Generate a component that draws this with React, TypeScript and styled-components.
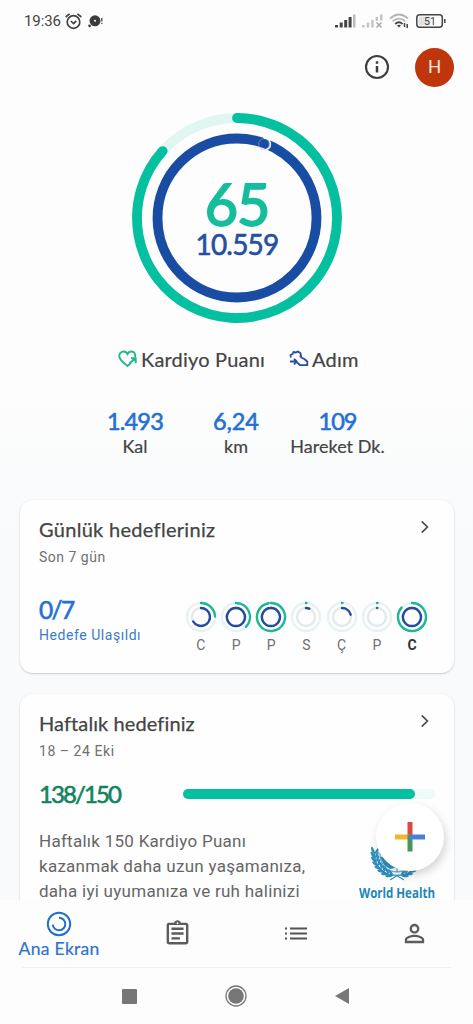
import React from "react";
import styled, { createGlobalStyle } from "styled-components";
import { MdOutlineAssignment, MdPersonOutline } from "react-icons/md";

const sans = `Lato, "Noto Sans", sans-serif`;
const roboto = `Roboto, "Noto Sans", sans-serif`;

const Global = createGlobalStyle`
  * { box-sizing: border-box; }
  body { margin: 0; background: #fdfdfd; font-family: ${roboto}; overflow: hidden; }
  svg { display: block; flex: none; }
`;

const Screen = styled.div`
  width: 473px;
  height: 1024px;
  display: flex;
  flex-direction: column;
  overflow: hidden;
  background: #fdfdfd;
`;

const Text = styled.span<{
  $size: number;
  $color: string;
  $line: number;
  $weight?: number;
  $spacing?: number;
  $stroke?: number;
  $body?: boolean;
}>`
  display: block;
  font-family: ${(p) => (p.$body ? roboto : sans)};
  font-size: ${(p) => p.$size}px;
  line-height: ${(p) => p.$line}px;
  color: ${(p) => p.$color};
  font-weight: ${(p) => p.$weight ?? 400};
  letter-spacing: ${(p) => p.$spacing ?? 0}px;
  -webkit-text-stroke: ${(p) => p.$stroke ?? 0}px currentColor;
  white-space: pre;
`;

const StatusBar = styled.div`
  height: 42px;
  flex: none;
  display: flex;
  align-items: center;
  justify-content: space-between;
  padding: 0 27px 0 24px;
`;
const StatusGroup = styled.div<{ $gap: number }>`
  display: flex;
  align-items: center;
  gap: ${(p) => p.$gap}px;
`;

const TopBar = styled.div`
  height: 50px;
  flex: none;
  display: flex;
  align-items: center;
  justify-content: flex-end;
  gap: 25px;
  padding-right: 19px;
`;
const Avatar = styled.div`
  width: 39px;
  height: 39px;
  border-radius: 50%;
  background: #bf360c;
  display: flex;
  align-items: center;
  justify-content: center;
`;

const Scroll = styled.main`
  height: 808px;
  flex: none;
  overflow: hidden;
  background: linear-gradient(#fdfdfd 300px, #f8fafb 440px);
`;
const Hero = styled.section`
  width: 212px;
  height: 212px;
  margin: 20px auto 0 131px;
  display: grid;
  > * { grid-area: 1 / 1; }
`;
const HeroNumbers = styled.div`
  display: flex;
  flex-direction: column;
  align-items: center;
  padding-top: 65px;
`;
const Legend = styled.div`
  display: flex;
  align-items: center;
  height: 30px;
  margin-top: 20px;
  padding-left: 118px;
  gap: 24px;
`;
const LegendItem = styled.div`
  display: flex;
  align-items: center;
  gap: 3px;
`;
const Stats = styled.div`
  display: grid;
  grid-template-columns: 102px 100px 103px;
  padding-left: 84px;
  margin-top: 34px;
  height: 92px;
`;
const Stat = styled.div`
  display: flex;
  flex-direction: column;
  align-items: center;
`;

const Card = styled.section<{ $height: number }>`
  height: ${(p) => p.$height}px;
  margin: 0 19px 21px 20px;
  padding: 17px 19px 0;
  background: #fefefe;
  border-radius: 13px;
  box-shadow: 0 1px 2px rgba(60, 64, 67, 0.22), 0 0 2px rgba(60, 64, 67, 0.05);
`;
const CardHead = styled.div`
  display: flex;
  justify-content: space-between;
  padding-right: 5px;
  > svg { margin-top: 2px; }
`;
const CardTitles = styled.div`
  display: flex;
  flex-direction: column;
  gap: 2px;
`;
const GoalRow = styled.div`
  display: flex;
  justify-content: space-between;
  margin-top: 27px;
  margin-right: 7px;
`;
const Days = styled.div`
  display: flex;
  gap: 3.2px;
  padding-top: 4px;
`;
const Day = styled.div`
  width: 32px;
  display: flex;
  flex-direction: column;
  align-items: center;
`;
const WeekRow = styled.div`
  display: flex;
  align-items: center;
  justify-content: space-between;
  height: 30px;
  margin-top: 15px;
`;
const Track = styled.div`
  width: 252px;
  height: 10px;
  border-radius: 5px;
  background: #eefaf7;
`;
const Fill = styled.div`
  height: 100%;
  border-radius: 5px;
  background: #04c0a0;
`;
const WeekBody = styled.div`
  display: flex;
  justify-content: space-between;
  margin-top: 20px;
`;
const Partner = styled.div`
  width: 76px;
  margin-top: 6px;
  position: relative;
`;
const PartnerName = styled.span`
  display: block;
  width: max-content;
  font: 700 15px/18px "Open Sans", sans-serif;
  color: #1c87b5;
  white-space: nowrap;
  transform: scaleX(0.768);
  transform-origin: left;
`;
const Fab = styled.button`
  position: absolute;
  left: 17px;
  top: -32px;
  width: 68px;
  height: 68px;
  padding: 0;
  border: 0;
  border-radius: 50%;
  background: #fff;
  display: flex;
  align-items: center;
  justify-content: center;
  box-shadow: 2px 4px 8px rgba(60, 64, 67, 0.22);
`;

const TabBar = styled.nav`
  height: 67px;
  flex: none;
  display: grid;
  grid-template-columns: repeat(4, 118.3px);
  background: #fdfdfd;
`;
const Tab = styled.div<{ $active?: boolean }>`
  display: flex;
  flex-direction: column;
  align-items: center;
  justify-content: ${(p) => (p.$active ? "flex-start" : "center")};
  padding-top: ${(p) => (p.$active ? 11 : 0)}px;
  color: #5c5c5c;
`;
const SystemBar = styled.div`
  height: 57px;
  flex: none;
  display: flex;
  align-items: center;
  margin: 0 22px;
  border-top: 1px solid #f1f1f1;
  padding-left: 100px;
  gap: 88px;
`;

function arcPath(c: number, r: number, from: number, to: number) {
  const pt = (a: number) => {
    const t = ((a - 90) * Math.PI) / 180;
    return `${(c + r * Math.cos(t)).toFixed(2)} ${(c + r * Math.sin(t)).toFixed(2)}`;
  };
  return `M${pt(from)}A${r} ${r} 0 ${to - from > 180 ? 1 : 0} 1 ${pt(to)}`;
}

function MainRing() {
  return (
    <svg width="212" height="212" fill="none" strokeLinecap="round" strokeWidth="9.8">
      <circle cx="106" cy="106" r="100" stroke="#e0f6f1" />
      <path d={arcPath(106, 100, 0, 312)} stroke="#04c0a0" />
      <circle cx="106" cy="106" r="79.5" stroke="#184da3" />
      <circle cx="133" cy="32" r="5.4" stroke="#8ea9d5" strokeWidth=".6" />
      <path d="M133.5 26.2A5.8 5.8 0 0 1 135.4 37.5" stroke="#f4f8ff" strokeWidth="1.5" />
    </svg>
  );
}

type DayData = { label: string; outer: number; inner: number; today?: boolean };
const days: DayData[] = [
  { label: "C", outer: 88, inner: 240 },
  { label: "P", outer: 135, inner: 359 },
  { label: "P", outer: 350, inner: 359 },
  { label: "S", outer: 2, inner: 22 },
  { label: "Ç", outer: 2, inner: 75 },
  { label: "P", outer: 2, inner: 2 },
  { label: "C", outer: 312, inner: 359, today: true },
];

function MiniRing({ outer, inner }: DayData) {
  return (
    <svg width="32" height="32" fill="none" strokeLinecap="round" strokeWidth="2.4">
      <circle cx="16" cy="16" r="14" stroke="#e6f3f2" />
      <circle cx="16" cy="16" r="9" stroke="#e4e9ec" />
      <path d={arcPath(16, 14, 0, outer)} stroke="#1db793" />
      <path d={arcPath(16, 9, 0, inner)} stroke={inner < 5 ? "#3d6170" : "#254b9c"} />
    </svg>
  );
}

const Chevron = () => (
  <svg width="10" height="16" viewBox="0 0 10 16" fill="none" stroke="#4d4d4d" strokeWidth="1.7">
    <path d="M1.7 2.3l5.7 5.7-5.7 5.7" />
  </svg>
);

const leafAngles = [186, 175, 164, 153, 142, 131, 120, 109];

function Laurel() {
  return (
    <g>
      <path d="M15.5 17C15 32 26 41 37 40l8 5" fill="none" stroke="#2c8dbc" strokeWidth="1.2" />
      {leafAngles.map((deg) => {
        const t = (deg * Math.PI) / 180;
        const at = (r: number) => ({ x: 38 + r * Math.cos(t), y: 18 + r * Math.sin(t) });
        const out = at(24.3);
        const inn = at(20.2);
        return (
          <g key={deg} fill="#2c8dbc">
            <ellipse cx={out.x} cy={out.y} rx="1.3" ry="3.8" transform={`rotate(${deg - 205} ${out.x} ${out.y})`} />
            <ellipse cx={inn.x} cy={inn.y} rx="1.2" ry="3.3" transform={`rotate(${deg - 150} ${inn.x} ${inn.y})`} />
          </g>
        );
      })}
    </g>
  );
}

function Emblem() {
  return (
    <svg width="76" height="48" viewBox="0 0 76 48">
      <Laurel />
      <g transform="translate(76 0) scale(-1 1)"><Laurel /></g>
      <g fill="none" stroke="#2c8dbc" strokeWidth=".9">
        <circle cx="38" cy="20" r="17" />
        <circle cx="38" cy="20" r="12.5" />
        <path d="M38 20v17M38 20L26 32M38 20l12 12" />
      </g>
      <path d="M21 22l5-1 5 4 1 5 4 3-5 1-6-4z" fill="#2c8dbc" />
    </svg>
  );
}

const stats = [
  { value: "1.493", label: "Kal", spacing: -0.8 },
  { value: "6,24", label: "km", spacing: -0.1 },
  { value: "109", label: "Hareket Dk.", spacing: -1 },
];

export default function App() {
  return (
    <Screen>
      <Global />
      <StatusBar>
        <StatusGroup $gap={4}>
          <Text $body $size={15} $line={18} $color="#444" $spacing={-0.1}>19:36</Text>
          <svg width="17" height="17" viewBox="0 0 17 17" fill="none" stroke="#444" strokeWidth="1.7">
            <circle cx="8.5" cy="9" r="6.3" />
            <path d="M.7 4L4.6 .8M16.3 4L12.4 .8M5.8 8l2.7 2.5L11.3 8" />
          </svg>
          <svg width="17" height="15" viewBox="0 0 17 15" fill="#3c3c3c">
            <circle cx="9" cy="6.8" r="5.5" />
            <circle cx="3.6" cy="11.8" r="1.4" />
            <circle cx="9" cy="6.8" r="1" fill="#fff" />
            <path d="M15.2 4h1.2v3.5h-1.2zM15.2 8.8h1.2v1.3h-1.2z" />
          </svg>
        </StatusGroup>
        <StatusGroup $gap={6}>
          <svg width="21" height="14" fill="#444">
            <path d="M0 11h3v2.5H0zM4.7 8.5h3v5h-3zM9.2 6h3v7.5h-3zM13.6 3h3v10.5h-3z" />
            <path d="M18 .5h2.5v13H18z" fill="#bbb" />
          </svg>
          <svg width="21" height="14" fill="#c4c4c4">
            <path d="M0 11h2.5v2.5H0zM4.7 8.5h2.5v5H4.7zM9.2 6h2.5v7.5H9.2zM13.6 3h2.5v4h-2.5zM18 .5h2.5v6H18z" />
            <path d="M14.5 8.5l5 5M19.5 8.5l-5 5" stroke="#aaa" strokeWidth="1.5" />
          </svg>
          <svg width="21" height="16" fill="none" strokeWidth="1.8">
            <path d="M1 5.5Q10 -2.5 19 5.5M3.7 8.3Q10 3 16.3 8.3" stroke="#b5b5b5" />
            <path d="M6.2 11Q10 7.5 13.5 11" stroke="#444" />
            <path d="M8 12.5q2-1.5 4 0l-2 2z" fill="#444" />
            <path d="M15.5 10v4M18.2 11v4" stroke="#444" strokeWidth="1.5" />
          </svg>
          <svg width="30" height="14" fill="none" stroke="#444">
            <rect x=".8" y=".8" width="25.5" height="12.4" rx="3" strokeWidth="1.5" />
            <path d="M2.5 2.5h12v9h-12z" fill="#e2e2e2" stroke="none" />
            <path d="M28.8 5v4" strokeWidth="1.5" />
            <text x="8" y="10.7" fill="#444" stroke="none" fontFamily="Roboto, sans-serif" fontSize="10.5">51</text>
          </svg>
        </StatusGroup>
      </StatusBar>
      <TopBar>
        <svg width="26" height="26" fill="none" stroke="#3d3d3d" strokeWidth="2.1">
          <circle cx="13" cy="13" r="11" />
          <path d="M13 12v6.5M13 7.3v2.4" strokeWidth="2.5" />
        </svg>
        <Avatar><Text $body $size={18.5} $line={39} $color="#ffe9df">H</Text></Avatar>
      </TopBar>

      <Scroll>
        <Hero>
          <MainRing />
          <HeroNumbers>
            <Text $size={57.5} $line={54} $stroke={1.8} $spacing={-1.2} $color="#16bd9c">65</Text>
            <Text $size={28} $line={27} $stroke={0.6} $color="#2450a0" $spacing={-0.8}>10.559</Text>
          </HeroNumbers>
        </Hero>
        <Legend>
          <LegendItem>
            <svg width="20" height="18" viewBox="0 0 20 18" fill="none" stroke="#1eb88c" strokeWidth="1.9">
              <path d="M17 7C18 4 16 1.3 13.2 1.5 11.3 1.6 10 3 9.5 4 9 3 7.5 1.5 5.7 1.5 3 1.5 1 3.6 1.3 6.3 1.6 10 6 13 9.5 16L13 12.8M11.5 13.2L17.5 8.2M13 8.2h4.7v5" />
            </svg>
            <Text $size={20} $line={26} $color="#444" $stroke={0.2} $spacing={0.2}>Kardiyo Puanı</Text>
          </LegendItem>
          <LegendItem>
            <svg width="20" height="18" viewBox="0 0 20 18" fill="none" stroke="#264e9b" strokeWidth="1.8" strokeLinejoin="round">
              <path d="M1.8 7.5L1.5 5l2-.8L4.5 2l2.3.5L9 1.4l2.5 1.8.8 4.3 3 1.5 3 2.5v3.7h-7L8 12.5M1 11.5h6M5 8.8l2.7 2.7L5 14.5M10.5 6.5l2-1" />
            </svg>
            <Text $size={20} $line={26} $color="#444" $stroke={0.2} $spacing={0.2}>Adım</Text>
          </LegendItem>
        </Legend>
        <Stats>
          {stats.map((s) => (
            <Stat key={s.label}>
              <Text $size={23.5} $line={26} $stroke={0.6} $spacing={s.spacing} $color="#2470d3">{s.value}</Text>
              <Text $size={18} $line={24} $color="#444" $stroke={0.2} $spacing={0.05}>{s.label}</Text>
            </Stat>
          ))}
        </Stats>

        <Card $height={173}>
          <CardHead>
            <CardTitles>
              <Text $size={20} $line={25} $color="#444" $stroke={0.25} $spacing={0.3}>Günlük hedefleriniz</Text>
              <Text $body $size={14} $line={26} $color="#707070" $spacing={0.5}>Son 7 gün</Text>
            </CardTitles>
            <Chevron />
          </CardHead>
          <GoalRow>
            <div>
              <Text $size={24.5} $line={25} $stroke={0.6} $spacing={-1.6} $color="#2470d3">0/7</Text>
              <Text $body $size={14} $line={26} $color="#3d7bc8" $spacing={0.55}>Hedefe Ulaşıldı</Text>
            </div>
            <Days>
              {days.map((d, i) => (
                <Day key={i}>
                  <MiniRing {...d} />
                  <Text $body $size={14} $line={24} $weight={d.today ? 700 : 400} $color={d.today ? "#333" : "#707070"}>{d.label}</Text>
                </Day>
              ))}
            </Days>
          </GoalRow>
        </Card>

        <Card $height={260}>
          <CardHead>
            <CardTitles>
              <Text $size={20} $line={25} $color="#444" $stroke={0.25} $spacing={0.1}>Haftalık hedefiniz</Text>
              <Text $body $size={14} $line={26} $color="#707070" $spacing={0.55}>18 – 24 Eki</Text>
            </CardTitles>
            <Chevron />
          </CardHead>
          <WeekRow>
            <Text $size={24} $line={30} $stroke={0.6} $spacing={-1.9} $color="#12835f">138/150</Text>
            <Track><Fill style={{ width: `${(138 / 150) * 100}%` }} /></Track>
          </WeekRow>
          <WeekBody>
            <Text $body $size={17} $line={25} $color="#666" $spacing={0.27}>{"Haftalık 150 Kardiyo Puanı\nkazanmak daha uzun yaşamanıza,\ndaha iyi uyumanıza ve ruh halinizi"}</Text>
            <Partner>
              <Emblem />
              <PartnerName>World Health</PartnerName>
              <Fab>
                <svg width="30" height="30">
                  <path d="M12.5 0h5v15h-5z" fill="#dc4a3f" />
                  <path d="M0 12.5h15v5H0z" fill="#f4b52b" />
                  <path d="M12.5 12.5h5v17h-5z" fill="#46985a" />
                  <path d="M15 12.5h15v5H15z" fill="#4c7fd9" />
                </svg>
              </Fab>
            </Partner>
          </WeekBody>
        </Card>
      </Scroll>

      <TabBar>
        <Tab $active>
          <svg width="26" height="26" fill="none" stroke="#2470c8" strokeWidth="2">
            <circle cx="13" cy="13" r="11.2" />
            <path d={arcPath(13, 6.3, 0, 265)} />
          </svg>
          <Text $size={17.5} $line={24} $stroke={0.2} $spacing={0.3} $color="#2e74cc">Ana Ekran</Text>
        </Tab>
        <Tab><MdOutlineAssignment size={29} /></Tab>
        <Tab>
          <svg width="22" height="15" stroke="#555" strokeWidth="2.2">
            <path d="M5 2.5h17M5 7.5h17M5 12.5h17M0 2.5h2M0 7.5h2M0 12.5h2" />
          </svg>
        </Tab>
        <Tab><MdPersonOutline size={29} /></Tab>
      </TabBar>
      <SystemBar>
        <svg width="15" height="15"><rect width="15" height="15" rx="1" fill="#777" /></svg>
        <svg width="22" height="22"><circle cx="11" cy="11" r="10" fill="none" stroke="#777" strokeWidth="1.3" /><circle cx="11" cy="11" r="7.8" fill="#777" /></svg>
        <svg width="14" height="16"><path d="M14 0v16L0 8z" fill="#777" /></svg>
      </SystemBar>
    </Screen>
  );
}
